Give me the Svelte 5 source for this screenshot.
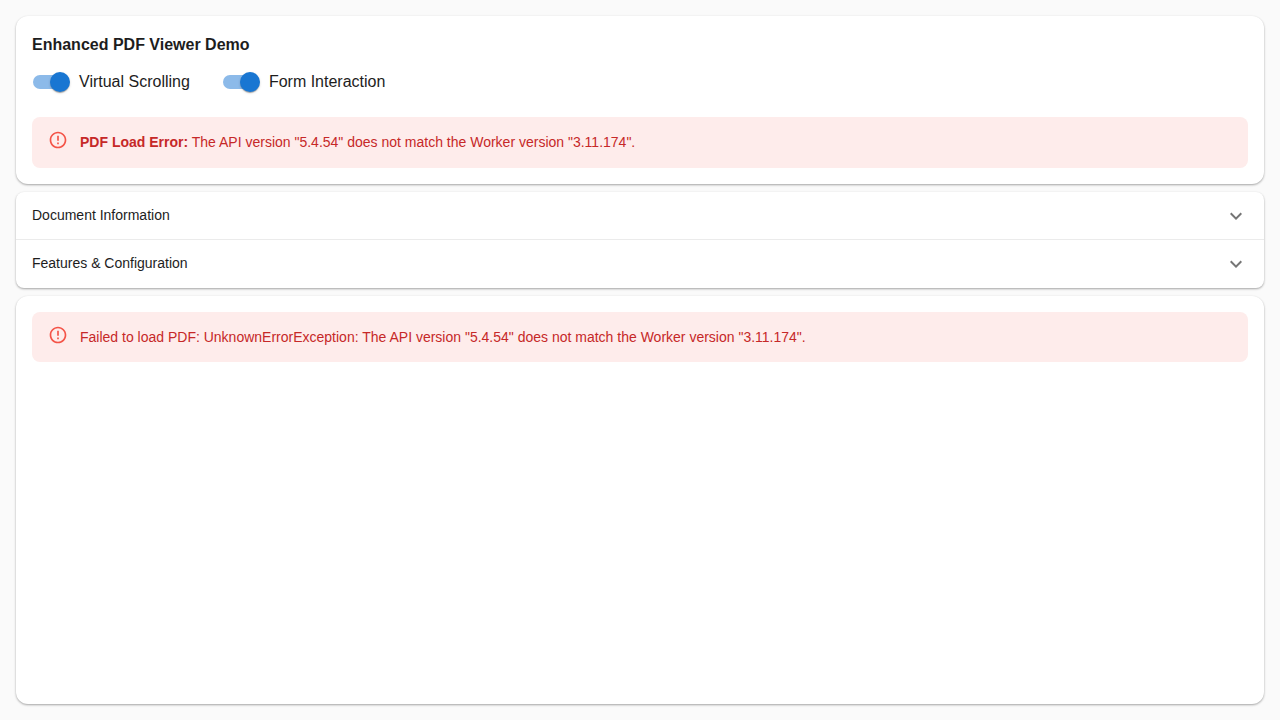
<script>
  let virtualScrolling = $state(true);
  let formInteraction = $state(true);
  let sections = $state([
    { title: 'Document Information', open: false },
    { title: 'Features & Configuration', open: false }
  ]);
</script>

{#snippet errorIcon()}
  <svg class="alert-icon" viewBox="0 0 24 24" aria-hidden="true">
    <path d="M11 15h2v2h-2zm0-8h2v6h-2zm.99-5C6.47 2 2 6.48 2 12s4.47 10 9.99 10C17.52 22 22 17.52 22 12S17.52 2 11.99 2zM12 20c-4.42 0-8-3.58-8-8s3.58-8 8-8 8 3.58 8 8-3.58 8-8 8z" />
  </svg>
{/snippet}

<main class="page">
  <section class="card">
    <h1>Enhanced PDF Viewer Demo</h1>
    <div class="switches">
      <label class="switch">
        <input type="checkbox" role="switch" bind:checked={virtualScrolling} />
        <span>Virtual Scrolling</span>
      </label>
      <label class="switch">
        <input type="checkbox" role="switch" bind:checked={formInteraction} />
        <span>Form Interaction</span>
      </label>
    </div>
    <div class="alert titled" role="alert">
      {@render errorIcon()}
      <p><strong>PDF Load Error:</strong> The API version "5.4.54" does not match the Worker version "3.11.174".</p>
    </div>
  </section>

  <section class="accordion">
    {#each sections as section}
      <button type="button" aria-expanded={section.open} onclick={() => (section.open = !section.open)}>
        <span>{section.title}</span>
        <svg class:open={section.open} viewBox="0 0 24 24" aria-hidden="true">
          <path d="M16.59 8.59 12 13.17 7.41 8.59 6 10l6 6 6-6z" />
        </svg>
      </button>
    {/each}
  </section>

  <section class="card viewer">
    <div class="alert" role="alert">
      {@render errorIcon()}
      <p>Failed to load PDF: UnknownErrorException: The API version "5.4.54" does not match the Worker version "3.11.174".</p>
    </div>
  </section>
</main>

<style>
  :global(body) {
    margin: 0;
    background: #fafafa;
  }

  .page {
    --shadow: 0 1px 3px rgba(0, 0, 0, 0.12), 0 1px 2px rgba(0, 0, 0, 0.24);
    box-sizing: border-box;
    min-height: 100vh;
    padding: 16px;
    display: flex;
    flex-direction: column;
    gap: 8px;
    font-family: "Liberation Sans", Arial, sans-serif;
    color: #1d1d1d;
  }

  .card {
    padding: 16px;
    border-radius: 12px;
    background: #fff;
    box-shadow: var(--shadow);
  }

  .viewer {
    flex: 1;
  }

  h1 {
    margin: 0 0 5px;
    font-size: 16px;
    line-height: 26px;
    font-weight: 700;
  }

  .switches {
    display: flex;
    flex-wrap: wrap;
    column-gap: 33px;
    margin-bottom: 16px;
    padding-left: 1px;
  }

  .switch {
    display: flex;
    align-items: center;
    height: 38px;
    gap: 9px;
    font-size: 16px;
    line-height: 24px;
    cursor: pointer;
  }

  .switch input {
    appearance: none;
    display: grid;
    grid-template-columns: 34px;
    width: 37px;
    height: 20px;
    margin: 0;
    cursor: pointer;
  }

  .switch input::before,
  .switch input::after {
    content: "";
    grid-area: 1 / 1;
    align-self: center;
  }

  .switch input::before {
    height: 14px;
    border-radius: 7px;
    background: #9e9e9e;
  }

  .switch input::after {
    width: 20px;
    height: 20px;
    border-radius: 50%;
    background: #fff;
    box-shadow: 0 2px 1px -1px rgba(0, 0, 0, 0.2), 0 1px 1px 0 rgba(0, 0, 0, 0.14), 0 1px 3px 0 rgba(0, 0, 0, 0.12);
    transition: margin-left 150ms;
  }

  .switch input:checked::before {
    background: #8cbae9;
  }

  .switch input:checked::after {
    margin-left: 17px;
    background: #1976d2;
  }

  .alert {
    display: flex;
    align-items: flex-start;
    gap: 12px;
    padding: 6px 16px;
    border-radius: 8px;
    background: #feeceb;
    color: #c62828;
    font-size: 14px;
    line-height: 22px;
  }

  .titled {
    line-height: 23px;
  }

  .alert p {
    margin: 0;
    padding: 8px 0;
  }

  .alert-icon {
    flex: none;
    width: 20px;
    height: 20px;
    padding: 7px 0;
    fill: #f44336;
    opacity: 0.9;
  }

  .accordion {
    border-radius: 8px;
    background: #fff;
    box-shadow: var(--shadow);
    overflow: hidden;
  }

  .accordion button {
    box-sizing: border-box;
    display: flex;
    align-items: center;
    justify-content: space-between;
    width: 100%;
    height: 48px;
    padding: 0 16px;
    border: 0;
    background: none;
    color: inherit;
    font: inherit;
    font-size: 14px;
    line-height: 20px;
    text-align: left;
    cursor: pointer;
  }

  .accordion button:not(:last-child) {
    box-shadow: inset 0 -1px #ebebeb;
  }

  .accordion span {
    padding-bottom: 2px;
  }

  .accordion svg {
    width: 24px;
    height: 24px;
    fill: rgba(0, 0, 0, 0.54);
  }

  .accordion svg.open {
    transform: rotate(180deg);
  }
</style>
